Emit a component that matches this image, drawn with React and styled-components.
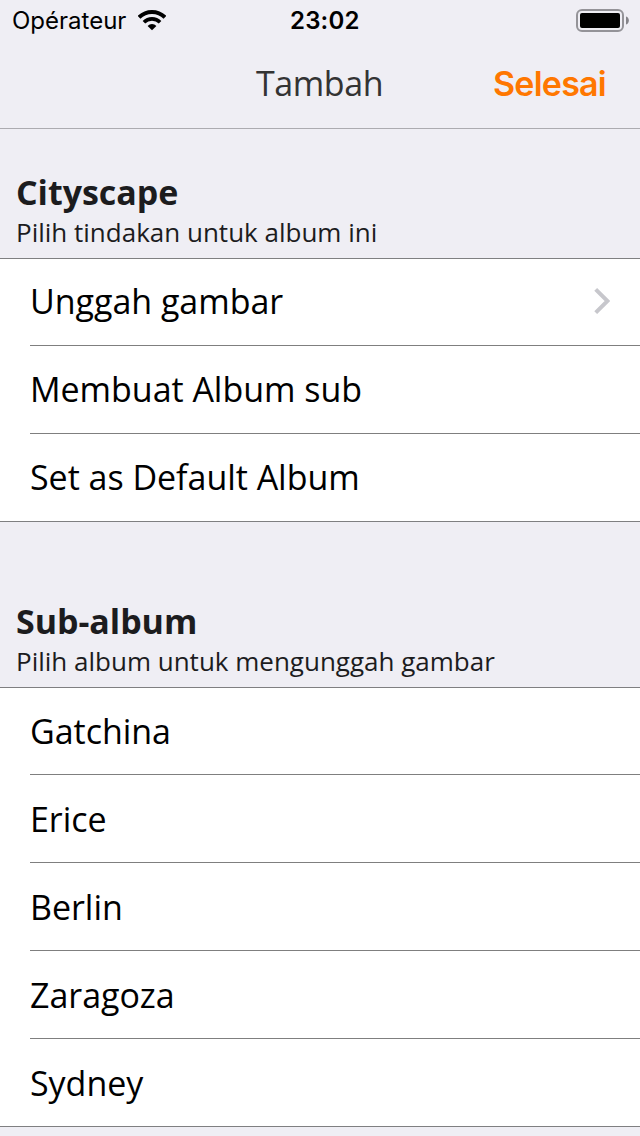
import React from "react";
import styled, { createGlobalStyle } from "styled-components";

const Global = createGlobalStyle`
  * { box-sizing: border-box; }
  html, body { margin: 0; background: #efeef4; }
  body { font-family: "Open Sans", sans-serif; color: #000; overflow: hidden; }
`;

const Screen = styled.main`
  width: 640px;
  height: 1136px;
  overflow: hidden;
  background: #efeef4;
`;

const StatusBar = styled.header`
  display: grid;
  grid-template-columns: 290px auto 1fr;
  align-items: center;
  height: 40px;
  padding: 0 11px 0 0;
  font-family: Inter, sans-serif;
  font-size: 24px;
`;

const Carrier = styled.div`
  display: flex;
  align-items: center;
  gap: 12px;
  padding: 1px 0 0 12px;
  letter-spacing: 0;
`;

const Clock = styled.div`
  padding-top: 1px;
  font-weight: 600;
  letter-spacing: 0.2px;
`;

const BatteryIcon = styled.svg`
  justify-self: end;
`;

const NavBar = styled.nav`
  display: grid;
  grid-template-columns: 1fr auto 1fr;
  align-items: center;
  height: 89px;
  padding: 0 33px 2px;
  border-bottom: 1px solid #acabb0;
`;

const Title = styled.h1`
  grid-column: 2;
  margin: 0 1px 0 0;
  font-size: 34px;
  font-weight: 400;
  letter-spacing: -0.4px;
  color: #333;
`;

const DoneButton = styled.button`
  justify-self: end;
  padding: 0 1px 0 0;
  border: 0;
  background: none;
  font: 600 34px Inter, sans-serif;
  letter-spacing: -0.75px;
  color: #ff7700;
`;

const SectionHeader = styled.div`
  height: ${(p) => p.$height}px;
  padding: 0 16px 9px;
  display: flex;
  flex-direction: column;
  justify-content: flex-end;
  color: #1c1c1e;
`;

const Heading = styled.h2`
  margin: 0;
  font-size: 34px;
  line-height: 46px;
  font-weight: 700;
  letter-spacing: -0.05px;
`;

const Hint = styled.p`
  margin: 0;
  font-size: 26px;
  line-height: 34px;
`;

const List = styled.ul`
  margin: 0;
  padding: 0 0 0 30px;
  list-style: none;
  background: #fff;
  border-top: 1px solid #7f7f81;
  border-bottom: 1px solid #7f7f81;
`;

const Row = styled.li`
  display: flex;
  align-items: flex-start;
  justify-content: space-between;
  height: 88px;
  padding: ${(p) => p.$inset}px 30px 0 0;
  font-size: 34px;
  line-height: 46px;
  letter-spacing: -0.03px;
  &:first-child { height: 87px; padding-top: ${(p) => p.$inset - 1}px; }
  &:last-child { height: 87px; }
  &:not(:last-child) { border-bottom: 1px solid #7f7f7f; }
`;

const ChevronIcon = styled.svg`
  margin-top: 9px;
`;

const Wifi = () => (
  <svg width="28" height="21" viewBox="0 0 28 21" fill="none" stroke="#000">
    <path d="M1.03 7.33a18.35 18.35 0 0 1 25.94 0" strokeWidth="3.9" />
    <path d="M5.94 12.24a11.4 11.4 0 0 1 16.12 0" strokeWidth="3.6" />
    <path d="M14 20.3l-4.4-4.4a6.2 6.2 0 0 1 8.8 0z" fill="#000" stroke="none" />
  </svg>
);

const Battery = () => (
  <BatteryIcon width="53" height="24" viewBox="0 0 53 24">
    <rect x="1" y="2" width="46" height="21" rx="5" fill="none" stroke="#949398" strokeWidth="2" />
    <rect x="4" y="5" width="40" height="15" rx="2" />
    <path d="M50 8.5c3.8 1 3.8 7 0 8z" fill="#858489" />
  </BatteryIcon>
);

const Chevron = () => (
  <ChevronIcon width="16" height="27" viewBox="0 0 16 27" fill="none" stroke="#c7c7cc" strokeWidth="4">
    <path d="M1.7 2.3l11.8 11.7L1.7 25.6" />
  </ChevronIcon>
);

const sections = [
  {
    title: "Cityscape",
    hint: "Pilih tindakan untuk album ini",
    height: 129,
    inset: 20,
    rows: ["Unggah gambar", "Membuat Album sub", "Set as Default Album"],
    opens: "Unggah gambar",
  },
  {
    title: "Sub-album",
    hint: "Pilih album untuk mengunggah gambar",
    height: 165,
    inset: 21,
    rows: ["Gatchina", "Erice", "Berlin", "Zaragoza", "Sydney"],
  },
];

export default function App() {
  return (
    <Screen>
      <Global />
      <StatusBar>
        <Carrier>Opérateur <Wifi /></Carrier>
        <Clock>23:02</Clock>
        <Battery />
      </StatusBar>
      <NavBar>
        <Title>Tambah</Title>
        <DoneButton>Selesai</DoneButton>
      </NavBar>
      {sections.map((s) => (
        <section key={s.title}>
          <SectionHeader $height={s.height}>
            <Heading>{s.title}</Heading>
            <Hint>{s.hint}</Hint>
          </SectionHeader>
          <List>
            {s.rows.map((r) => (
              <Row key={r} $inset={s.inset}>
                {r}
                {r === s.opens && <Chevron />}
              </Row>
            ))}
          </List>
        </section>
      ))}
    </Screen>
  );
}
